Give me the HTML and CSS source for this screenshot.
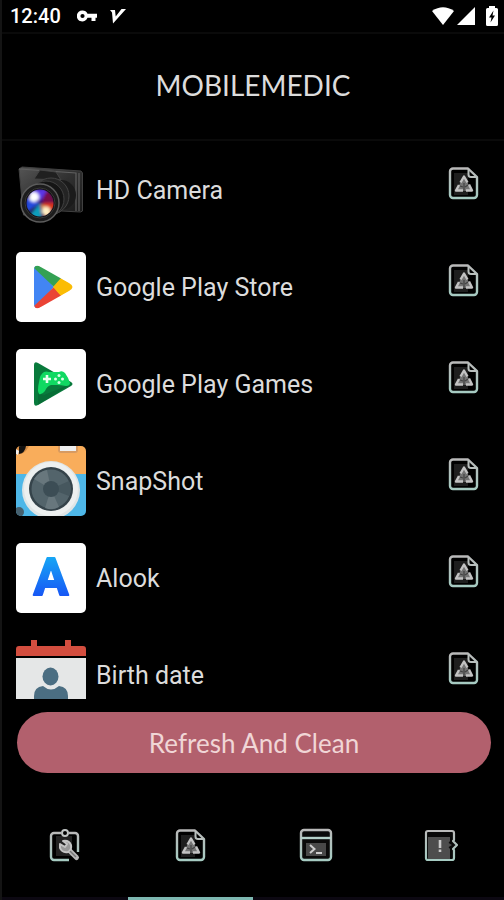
FILE: index.html
```html
<!DOCTYPE html>
<html lang="en">
<head>
  <meta charset="UTF-8">
  <meta name="viewport" content="width=device-width, initial-scale=1">
  <title>MobileMedic</title>
  <link rel="stylesheet" href="styles.css">
</head>
<body>

<!-- Shared icons -->
<svg class="defs" width="0" height="0" aria-hidden="true">
  <symbol id="icon-clean" viewBox="0 0 36 36">
    <path d="M9 8h14v22H9z" fill="#1e1e1e"/>
    <path d="M23 3.500H8a3 3 0 0 0-3 3V30a3 3 0 0 0 3 3h21a3 3 0 0 0 3-3V12z" fill="none" stroke="url(#line)" stroke-width="2.400" stroke-linejoin="round"/>
    <path d="M23.500 4v5.500a2.500 2.500 0 0 0 2.500 2.500h5.500" fill="none" stroke="#b9bfbd" stroke-width="2"/>
    <path d="M19 11l8 15H11z" fill="#747474"/>
    <path d="M15.500 17.500l3.500-6 3.500 6M24 19.500l3 6h-6M18 25.500h-7l3-5.500" fill="none" stroke="#c2c2c2" stroke-width="2.400" stroke-linejoin="round"/>
    <path d="M19 18v8M15 21l3 1M23 20l-3 2" stroke="#424242" stroke-width="1.200"/>
  </symbol>
  <linearGradient id="line" x1="0" y1="0" x2="0" y2="1">
    <stop offset="0" stop-color="#b9b9b9"/>
    <stop offset="1" stop-color="#a6cbc2"/>
  </linearGradient>
</svg>

<div class="app">
  <div class="status">
    <span class="time">12:40</span>
    <svg width="20" height="12" viewBox="0 0 20 12" aria-hidden="true">
      <path fill="#fff" fill-rule="evenodd" d="M5.500.500a5.500 5.500 0 0 1 5 3.200H20v4h-1.500V11h-4V7.700h-4A5.500 5.500 0 1 1 5.500.500zm0 3.400a2.100 2.100 0 1 0 0 4.200 2.100 2.100 0 0 0 0-4.200z"/>
    </svg>
    <svg class="vpn" width="16" height="15" viewBox="0 0 16 15" aria-hidden="true">
      <path fill="#fff" d="M0 1h5l.7 6.500L11.500 0H16L3 14.500 2 3.500z"/>
    </svg>
    <span class="spacer"></span>
    <svg width="22" height="18" viewBox="0 0 22 18" aria-hidden="true">
      <path fill="#fff" d="M0 4Q11-3.500 22 4L11 18z"/>
    </svg>
    <svg class="signal" width="18" height="18" viewBox="0 0 18 18" aria-hidden="true">
      <path fill="#fff" d="M18 0v18H0z"/>
    </svg>
    <svg class="battery" width="12" height="20" viewBox="0 0 12 20" aria-hidden="true">
      <path fill="#fff" d="M3 0h6v2h1.500A1.500 1.500 0 0 1 12 3.500v15a1.500 1.500 0 0 1-1.500 1.500h-9A1.500 1.500 0 0 1 0 18.500v-15A1.500 1.500 0 0 1 1.500 2H3z"/>
      <path fill="#000" d="M7.500 4.500L3 11.500h2.500l-1 5L9 9.500H6.500z"/>
    </svg>
  </div>

  <header class="header">
    <h1>MOBILEMEDIC</h1>
  </header>

  <ul class="apps">
    <li class="app-row">
      <svg class="app-icon" viewBox="0 0 70 70" aria-hidden="true">
        <defs>
          <linearGradient id="body" x1="0" y1="0" x2="1" y2="1">
            <stop offset="0" stop-color="#555"/>
            <stop offset=".5" stop-color="#303030"/>
            <stop offset="1" stop-color="#191919"/>
          </linearGradient>
          <filter id="soft"><feGaussianBlur stdDeviation="1.500"/></filter>
          <clipPath id="glass"><circle cx="24" cy="48" r="13.500"/></clipPath>
        </defs>
        <path d="M3 14l3-2 59 4 1.500 2v38l-2 1-19-1-10 5-28-1z" fill="url(#body)" stroke="#404040"/>
        <path d="M3 14l57 4v38M63 18v38" fill="none" stroke="#606060" stroke-width="1.200"/>
        <path d="M18 24l6-9 16 2 5 8z" fill="#202020" stroke="#444"/>
        <circle cx="45" cy="40" r="15" fill="#1b1b1b"/>
        <circle cx="35" cy="41" r="18" fill="#242424" stroke="#444"/>
        <circle cx="30" cy="44" r="18" fill="#151515" stroke="#404040"/>
        <circle cx="24" cy="48" r="19" fill="#1c1c1c" stroke="#5c5c5c" stroke-width="1.500"/>
        <circle cx="24" cy="48" r="15" fill="#101010" stroke="#383838"/>
        <g clip-path="url(#glass)">
          <path d="M10 34h28v28H10z" fill="#251447"/>
          <g filter="url(#soft)">
            <path d="M24 48L8 34h24z" fill="#5b36e8"/>
            <path d="M24 48l8-14 8 14z" fill="#76104a"/>
            <path d="M24 48h16v10z" fill="#d73012"/>
            <path d="M24 48l14 10-8 8z" fill="#f79529"/>
            <path d="M24 48l2 16H10z" fill="#089ebc"/>
            <path d="M24 48L10 42v16z" fill="#244ce0"/>
            <circle cx="18" cy="42" r="5" fill="#fff"/>
            <circle cx="30" cy="56" r="4.500" fill="#fff0c5"/>
            <circle cx="25" cy="47" r="2.500" fill="#3b096a"/>
          </g>
        </g>
      </svg>
      <span class="app-name">HD Camera</span>
      <button class="icon-btn" type="button" aria-label="Clean HD Camera"><svg class="icon"><use href="#icon-clean"/></svg></button>
    </li>

    <li class="app-row">
      <svg class="app-icon tile" viewBox="0 0 70 70" aria-hidden="true">
        <clipPath id="play"><path d="M18 18Q18 13 23 14L53 31Q60 35 53 39L23 56Q18 57 18 52z"/></clipPath>
        <g clip-path="url(#play)">
          <path d="M18 12v46l20-23z" fill="#4285f4"/>
          <path d="M18 12v4l20 19 10-12z" fill="#34a153"/>
          <path d="M18 58v-4l20-19 10 12z" fill="#ea4335"/>
          <path d="M37 35l8-9 16 9-16 9z" fill="#fbbc04"/>
        </g>
      </svg>
      <span class="app-name">Google Play Store</span>
      <button class="icon-btn" type="button" aria-label="Clean Google Play Store"><svg class="icon"><use href="#icon-clean"/></svg></button>
    </li>

    <li class="app-row">
      <svg class="app-icon tile" viewBox="0 0 70 70" aria-hidden="true">
        <path d="M18 16q0-4 4-2l33 19q3 2 0 4L22 56q-4 2-4-2z" fill="#087a3c"/>
        <path d="M22 44l6 2 27-11-33 21z" fill="#065f30" opacity=".5"/>
        <path d="M28 23q2-1 5 0h10q3-2 6 1 3 4 5 10 0 3-4 3-5-1-9-1h-6q-4 1-6 6-3 4-6 3-2-3 0-12 1-8 5-10z" fill="#10d962"/>
        <path d="M31 26v8M27 30h8" stroke="#e8fff0" stroke-width="2.600"/>
        <g fill="#d9ffe7">
          <circle cx="43" cy="26.500" r="1.500"/><circle cx="43" cy="33.500" r="1.500"/>
          <circle cx="39.500" cy="30" r="1.500"/><circle cx="46.500" cy="30" r="1.500"/>
        </g>
      </svg>
      <span class="app-name">Google Play Games</span>
      <button class="icon-btn" type="button" aria-label="Clean Google Play Games"><svg class="icon"><use href="#icon-clean"/></svg></button>
    </li>

    <li class="app-row">
      <svg class="app-icon rounded" viewBox="0 0 70 70" aria-hidden="true">
        <path d="M0 0h70v28H0z" fill="#f9ad5b"/>
        <path d="M0 28h70v42H0z" fill="#4eb7e8"/>
        <path d="M0 0h13Q9 8 4 8L0 9z" fill="#d68e47"/>
        <path d="M3 0h7Q9 7 3 8z" fill="#111"/>
        <path d="M0 3l3 2-1 4-2-1z" fill="#eee"/>
        <path d="M42 0h20v4q0 3-3 3H45q-3 0-3-3z" fill="#d79a61"/>
        <path d="M44 0h16v5H44z" fill="#eee"/>
        <circle cx="3" cy="66" r="5" fill="#46606e"/>
        <circle cx="35" cy="44" r="29" fill="#dfe5e6"/>
        <circle cx="35" cy="43" r="27" fill="#edf0f0"/>
        <circle cx="35" cy="43" r="22" fill="#35434a"/>
        <circle cx="35" cy="43" r="19.500" fill="#53646b"/>
        <path d="M35 43L18 33q5-8 13-9z" fill="#68777d"/>
        <path d="M35 43l8 18q-7 4-14 1z" fill="#68777d"/>
        <path d="M35 43l18-8q4 8 0 15z" fill="#46575e"/>
        <circle cx="35" cy="43" r="8" fill="#3c4d55"/>
      </svg>
      <span class="app-name">SnapShot</span>
      <button class="icon-btn" type="button" aria-label="Clean SnapShot"><svg class="icon"><use href="#icon-clean"/></svg></button>
    </li>

    <li class="app-row">
      <svg class="app-icon tile" viewBox="0 0 70 70" aria-hidden="true">
        <linearGradient id="blue" x1="0" y1="0" x2="0" y2="1">
          <stop offset=".15" stop-color="#16a8f5"/>
          <stop offset=".8" stop-color="#1757f5"/>
        </linearGradient>
        <text class="logo-letter" x="35" y="52" text-anchor="middle" fill="url(#blue)" stroke="url(#blue)">A</text>
      </svg>
      <span class="app-name">Alook</span>
      <button class="icon-btn" type="button" aria-label="Clean Alook"><svg class="icon"><use href="#icon-clean"/></svg></button>
    </li>

    <li class="app-row">
      <svg class="app-icon" viewBox="0 0 70 70" aria-hidden="true">
        <path d="M0 16V9q0-3 3-3h12V0h6v6h28V0h6v6h12q3 0 3 3v7z" fill="#d34e3f"/>
        <path d="M0 18h70v52H0z" fill="#e5e7e7"/>
        <ellipse cx="34.500" cy="36.500" rx="8" ry="9" fill="#4b6e82"/>
        <path d="M18 70V56q0-9 9-10 8 7 16 0 9 1 9 10v14z" fill="#4b6e82"/>
      </svg>
      <span class="app-name">Birth date</span>
      <button class="icon-btn" type="button" aria-label="Clean Birth date"><svg class="icon"><use href="#icon-clean"/></svg></button>
    </li>
  </ul>

  <button class="clean-btn" type="button">Refresh And Clean</button>

  <nav class="tabs">
    <a class="tab" href="#tools" aria-label="Tools">
      <svg class="icon" viewBox="0 0 36 36">
        <path d="M9 9h16v20H9z" fill="#222"/>
        <path d="M14 6H7a3 3 0 0 0-3 3v21a3 3 0 0 0 3 3h15M22 6h6a3 3 0 0 1 3 3v16" fill="none" stroke="url(#line)" stroke-width="2.400"/>
        <circle cx="18" cy="6" r="3" fill="#000" stroke="#c1c5c4" stroke-width="2"/>
        <path d="M20 21l9.500 9.500" stroke="#b8b8b8" stroke-width="5" stroke-linecap="round"/>
        <path d="M16 14q6-1 8 4 1 5-3 7-6 1-8-4v-4l5 3 2-3z" fill="#999" stroke="#c4c4c4" stroke-width="2" stroke-linejoin="round"/>
        <path d="M23 24l6 6" stroke="#777" stroke-width="1.500"/>
      </svg>
    </a>
    <a class="tab active" href="#clean" aria-label="Clean" aria-current="page">
      <svg class="icon"><use href="#icon-clean"/></svg>
    </a>
    <a class="tab" href="#terminal" aria-label="Terminal">
      <svg class="icon" viewBox="0 0 36 36">
        <rect x="3" y="3" width="30" height="30" rx="3" fill="#0a0a0a" stroke="url(#line)" stroke-width="2.400"/>
        <path d="M3 11h30" stroke="#b5d1ca" stroke-width="2.400"/>
        <path d="M8 16h20v13H8z" fill="#484848"/>
        <path d="M12 18l4.500 4-4.500 4M18 26h6" fill="none" stroke="#ccc" stroke-width="2"/>
      </svg>
    </a>
    <a class="tab" href="#about" aria-label="About">
      <svg class="icon" viewBox="0 0 36 36">
        <path d="M5 5h26v9l3 4-3 4v10H5z" fill="#080808"/>
        <path d="M5 10h22v4l-3 4 3 4v10H5z" fill="#4d4d4d"/>
        <path d="M24 15l5 3-5 3z" fill="#4d4d4d"/>
        <path d="M31 13V6q0-2-2-2H5Q3 4 3 6v25q0 2 2 2h24q2 0 2-2v-8l-1-1 4-4-4-4z" fill="none" stroke="url(#line)" stroke-width="2.200" stroke-linejoin="round"/>
        <path d="M17 13v8M17 22.500v2.500" stroke="#c8c8c8" stroke-width="2.600"/>
      </svg>
    </a>
  </nav>
</div>

</body>
</html>
```
FILE: styles.css
```css
* {
  box-sizing: border-box;
}
body {
  margin: 0;
  background: #000;
  color: #dcdcdc;
  font-family: Roboto, "Liberation Sans", sans-serif;
}
.defs {
  position: absolute;
}
.app {
  display: flex;
  flex-direction: column;
  height: 100vh;
  border-left: 2px solid #141414;
}

/* Status bar */
.status {
  display: flex;
  align-items: center;
  flex: none;
  height: 32px;
  padding: 0 6px 0 8px;
  color: #fff;
}
.time {
  margin-right: 16px;
  font-size: 20px;
  font-weight: 500;
}
.vpn {
  margin-left: 13px;
}
.spacer {
  flex: 1;
}
.signal {
  margin-left: 3px;
}
.battery {
  margin-left: 11px;
}

/* Title */
.header {
  display: flex;
  align-items: center;
  justify-content: center;
  flex: none;
  height: 109px;
  padding-bottom: 4px;
  border-top: 2px solid #0a0a0a;
  border-bottom: 2px solid #0a0a0a;
}
.header h1 {
  margin: 0;
  font-family: Lato, sans-serif;
  font-size: 28px;
  font-weight: 400;
}

/* App list */
.apps {
  flex: 1;
  min-height: 0;
  margin: 0;
  padding: 0;
  overflow: hidden;
  list-style: none;
}
.app-row {
  display: flex;
  align-items: center;
  gap: 10px;
  height: 97px;
  padding: 0 20px 0 14px;
}
.app-icon {
  flex: none;
  width: 70px;
  height: 70px;
}
.tile {
  border-radius: 5px;
  background: #fff;
}
.rounded {
  border-radius: 5px;
}
.logo-letter {
  font-size: 52px;
  font-weight: 700;
  stroke-width: 2px;
  stroke-linejoin: round;
}
.app-name {
  flex: 1;
  padding-top: 2px;
  font-size: 25px;
}
.icon-btn {
  display: flex;
  padding: 3px;
  margin-bottom: 14px;
  border: none;
  background: none;
  cursor: pointer;
}
.icon {
  display: block;
  width: 36px;
  height: 36px;
}

/* Main action */
.clean-btn {
  flex: none;
  height: 61px;
  margin: 13px 13px 0 15px;
  border: none;
  border-radius: 31px;
  background: #b2606d;
  color: #f0d6d6;
  font-family: Lato, sans-serif;
  font-size: 26px;
  cursor: pointer;
}

/* Bottom tabs */
.tabs {
  display: flex;
  flex: none;
  height: 107px;
  margin-top: 20px;
}
.tab {
  display: flex;
  align-items: center;
  justify-content: center;
  flex: 1;
  border-bottom: 3px solid #0c0812;
}
.active {
  border-bottom-color: #7eb8b1;
}
```
